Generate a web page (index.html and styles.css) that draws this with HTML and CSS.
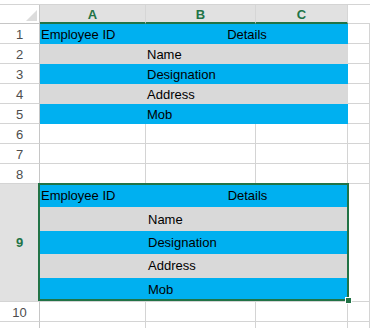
FILE: index.html
```html
<!DOCTYPE html>
<html lang="en">
<head>
    <meta charset="UTF-8">
    <title>Sheet</title>
    <link rel="stylesheet" href="styles.css">
</head>
<body>
<div class="sheet">

    <div class="row head">
        <div class="corner"><span class="tri"></span></div>
        <div class="col sel">A</div>
        <div class="col sel">B</div>
        <div class="col sel">C</div>
        <div class="col"></div>
    </div>

    <div class="row">
        <div class="num">1</div>
        <div class="cell blue">Employee ID</div>
        <div class="cell blue merged">Details</div>
        <div class="cell"></div>
    </div>
    <div class="row">
        <div class="num">2</div>
        <div class="cell gray"></div>
        <div class="cell gray">Name</div>
        <div class="cell gray"></div>
        <div class="cell"></div>
    </div>
    <div class="row">
        <div class="num">3</div>
        <div class="cell blue"></div>
        <div class="cell blue">Designation</div>
        <div class="cell blue"></div>
        <div class="cell"></div>
    </div>
    <div class="row">
        <div class="num">4</div>
        <div class="cell gray"></div>
        <div class="cell gray">Address</div>
        <div class="cell gray"></div>
        <div class="cell"></div>
    </div>
    <div class="row">
        <div class="num">5</div>
        <div class="cell blue"></div>
        <div class="cell blue">Mob</div>
        <div class="cell blue"></div>
        <div class="cell"></div>
    </div>
    <div class="row">
        <div class="num">6</div>
        <div class="cell"></div>
        <div class="cell"></div>
        <div class="cell"></div>
        <div class="cell"></div>
    </div>
    <div class="row">
        <div class="num">7</div>
        <div class="cell"></div>
        <div class="cell"></div>
        <div class="cell"></div>
        <div class="cell"></div>
    </div>
    <div class="row">
        <div class="num">8</div>
        <div class="cell"></div>
        <div class="cell"></div>
        <div class="cell"></div>
        <div class="cell"></div>
    </div>

    <!-- selected row with the pasted table -->
    <div class="row tall">
        <div class="num cur">9</div>
        <div class="block">
            <div class="brow blue">
                <span>Employee ID</span>
                <span class="mid">Details</span>
            </div>
            <div class="brow gray"><span></span><span>Name</span></div>
            <div class="brow blue"><span></span><span>Designation</span></div>
            <div class="brow gray"><span></span><span>Address</span></div>
            <div class="brow blue"><span></span><span>Mob</span></div>
            <div class="selection"><span class="handle"></span></div>
        </div>
        <div class="cell"></div>
    </div>

    <div class="row">
        <div class="num">10</div>
        <div class="cell"></div>
        <div class="cell"></div>
        <div class="cell"></div>
        <div class="cell"></div>
    </div>
    <div class="row">
        <div class="num"></div>
        <div class="cell"></div>
        <div class="cell"></div>
        <div class="cell"></div>
        <div class="cell"></div>
    </div>

</div>
</body>
</html>
```

FILE: styles.css
```css
* {
    margin: 0;
    padding: 0;
    box-sizing: border-box;
}

body {
    font-family: "Liberation Sans", Arial, sans-serif;
    font-size: 13px;
    color: #000;
    background: #fff;
}

.sheet {
    height: 328px;
    padding-top: 4px;
    overflow: hidden;
    display: flex;
    flex-direction: column;
}

.row {
    display: grid;
    grid-template-columns: 40px 106px 110px 92px 1fr;
    height: 20px;
    flex-shrink: 0;
}

.row.tall {
    height: 118px;
}

/* header row */

.head {
    border-top: 1px solid #d4d4d4;
}

.corner {
    border-right: 1px solid #c6c6c6;
    border-bottom: 1px solid #c6c6c6;
    display: flex;
    justify-content: flex-end;
    align-items: flex-end;
    padding: 0 2px 2px 0;
}

.tri {
    width: 11px;
    height: 11px;
    background: #dcdcdc;
    clip-path: polygon(100% 0, 100% 100%, 0 100%);
}

.col {
    border-bottom: 1px solid #d4d4d4;
    display: flex;
    align-items: center;
    justify-content: center;
    padding-top: 1px;
}

.col.sel {
    background: #e1e1e1;
    color: #217346;
    font-weight: bold;
    border-right: 1px solid #d6d6d6;
    border-bottom: 2px solid #217346;
}

/* row numbers */

.num {
    border-right: 1px solid #c6c6c6;
    border-bottom: 1px solid #d4d4d4;
    color: #4d4d4d;
    display: flex;
    justify-content: center;
    align-items: flex-end;
    padding-bottom: 1px;
    line-height: 15px;
}

.num.cur {
    background: #e1e1e1;
    color: #217346;
    font-weight: bold;
    align-items: center;
    padding-bottom: 0;
}

/* cells */

.cell {
    border-right: 1px solid #d4d4d4;
    border-bottom: 1px solid #d4d4d4;
    display: flex;
    align-items: flex-end;
    padding: 0 0 1px 1px;
    line-height: 15px;
    white-space: nowrap;
}

.cell.merged {
    grid-column: span 2;
    justify-content: center;
}

.blue {
    background: #00b0f0;
    border-color: #00b0f0;
}

.gray {
    background: #d9d9d9;
    border-color: #d9d9d9;
}

/* table inside row 9 */

.block {
    grid-column: span 3;
    position: relative;
    display: flex;
    flex-direction: column;
    border-bottom: 1px solid #d4d4d4;
}

.brow {
    flex: 1;
    display: grid;
    grid-template-columns: 106px 1fr;
    align-items: center;
    padding-left: 1px;
    padding-right: 1px;
}

.brow span + span {
    padding-left: 1px;
}

.brow .mid {
    text-align: center;
}

.selection {
    position: absolute;
    top: -1px;
    left: -2px;
    right: -1px;
    bottom: 0;
    border: 2px solid #217346;
}

.handle {
    position: absolute;
    right: -5px;
    bottom: -5px;
    width: 7px;
    height: 7px;
    background: #217346;
    border: 1px solid #fff;
}
```
